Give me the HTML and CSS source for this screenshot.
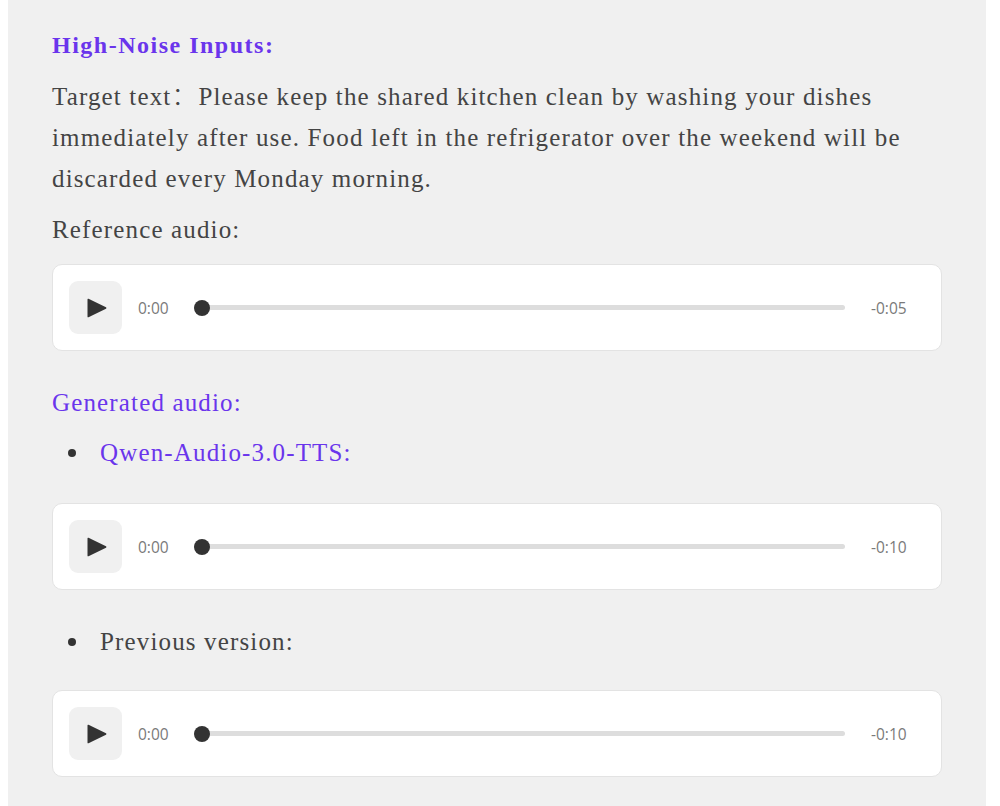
FILE: index.html
```html
<!DOCTYPE html>
<html lang="en">
<head>
<meta charset="utf-8">
<title>High-Noise Inputs</title>
<link rel="stylesheet" href="styles.css">
</head>
<body>
<div class="panel">
  <h3 class="heading">High-Noise Inputs:</h3>
  <p class="text">Target text<span class="fw">：</span>Please keep the shared kitchen clean by washing your dishes immediately after use. Food left in the refrigerator over the weekend will be discarded every Monday morning.</p>
  <p class="label">Reference audio:</p>
  <div class="player first">
    <button class="play" aria-label="Play"><svg width="22" height="22" viewBox="0 0 22 22"><path d="M2.5 1.8 L20 10.2 Q21 11 20 11.8 L2.5 20.2 Q1.5 20.7 1.5 19.5 V2.5 Q1.5 1.3 2.5 1.8 Z" fill="#333"/></svg></button>
    <span class="time">0:00</span>
    <div class="track"><span class="thumb"></span></div>
    <span class="time end">-0:05</span>
  </div>
  <p class="label accent gen">Generated audio:</p>
  <ul class="list">
    <li class="accent">Qwen-Audio-3.0-TTS:</li>
  </ul>
  <div class="player">
    <button class="play" aria-label="Play"><svg width="22" height="22" viewBox="0 0 22 22"><path d="M2.5 1.8 L20 10.2 Q21 11 20 11.8 L2.5 20.2 Q1.5 20.7 1.5 19.5 V2.5 Q1.5 1.3 2.5 1.8 Z" fill="#333"/></svg></button>
    <span class="time">0:00</span>
    <div class="track"><span class="thumb"></span></div>
    <span class="time end">-0:10</span>
  </div>
  <ul class="list prev">
    <li>Previous version:</li>
  </ul>
  <div class="player last">
    <button class="play" aria-label="Play"><svg width="22" height="22" viewBox="0 0 22 22"><path d="M2.5 1.8 L20 10.2 Q21 11 20 11.8 L2.5 20.2 Q1.5 20.7 1.5 19.5 V2.5 Q1.5 1.3 2.5 1.8 Z" fill="#333"/></svg></button>
    <span class="time">0:00</span>
    <div class="track"><span class="thumb"></span></div>
    <span class="time end">-0:10</span>
  </div>
</div>
</body>
</html>
```
FILE: styles.css
```css
html, body {
  margin: 0;
  padding: 0;
  background: #ffffff;
}
body {
  font-family: "Liberation Serif", "Noto Sans CJK SC", serif;
  color: #444444;
}
.panel {
  width: 978px;
  box-sizing: border-box;
  margin-left: 8px;
  background: #f0f0f0;
  border-radius: 0 0 8px 8px;
  padding: 25px 44px 40px 44px;
}
.heading {
  margin: 0;
  font-size: 24px;
  line-height: 41px;
  font-weight: bold;
  letter-spacing: 1.5px;
  color: #6a35ec;
}
.text,
.label,
.list {
  font-size: 25px;
  line-height: 41px;
  letter-spacing: 1.15px;
}
.text {
  margin: 10px 0 0 0;
}
.fw {
  font-family: "Noto Sans CJK SC", sans-serif;
  font-weight: 300;
  line-height: 1;
  letter-spacing: 0;
  margin-right: 2px;
}
.label {
  margin: 10px 0 0 0;
}
.accent {
  color: #6a35ec;
}
.gen {
  margin-top: 31px;
}
.list {
  list-style: none;
  margin: 9px 0 0 0;
  padding: 0 0 0 16px;
}
.list li {
  display: flex;
  align-items: center;
}
.list li::before {
  content: "";
  width: 8px;
  height: 8px;
  border-radius: 50%;
  background: #333333;
  margin-right: 24px;
  flex: none;
}
.list.prev {
  margin-top: 31px;
}
.player {
  margin-top: 30px;
  height: 87px;
  box-sizing: border-box;
  background: #ffffff;
  border: 1px solid #e3e3e3;
  border-radius: 10px;
  padding: 16px;
  display: flex;
  align-items: center;
}
.player.first {
  margin-top: 14px;
}
.player.last {
  margin-top: 28px;
}
.play {
  width: 53px;
  height: 53px;
  border: none;
  border-radius: 9px;
  background: #f0f0f0;
  display: flex;
  align-items: center;
  justify-content: center;
  padding: 0 0 0 3px;
  flex: none;
}
.time {
  font-family: "Open Sans", "Liberation Sans", sans-serif;
  font-size: 15.5px;
  color: #7a7a7a;
  margin-left: 16px;
  flex: none;
}
.time.end {
  margin-left: 26px;
  width: 54px;
}
.track {
  flex: 1;
  height: 5px;
  border-radius: 3px;
  background: #dddddd;
  margin-left: 25px;
  position: relative;
}
.thumb {
  position: absolute;
  left: 0;
  top: 50%;
  width: 16px;
  height: 16px;
  margin-top: -8px;
  border-radius: 50%;
  background: #333333;
}
```
